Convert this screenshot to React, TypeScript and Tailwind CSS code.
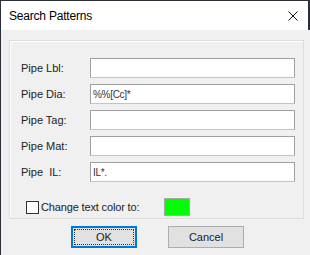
import React from 'react'

const rows = [
  { label: 'Pipe Lbl:', value: '' },
  { label: 'Pipe Dia:', value: '%%[Cc]*' },
  { label: 'Pipe Tag:', value: '' },
  { label: 'Pipe Mat:', value: '' },
  { label: 'Pipe  IL:', value: 'IL*.' },
]

export default function App() {
  return (
    <div className="w-[310px] h-[255px] overflow-hidden bg-[#f0f0f0] border-l border-t border-[#2b2f38] flex flex-col font-['Liberation_Sans',Arial,sans-serif] text-[11px] text-[#222]">
      <div className="h-[29px] shrink-0 bg-white flex items-center justify-between pl-[8px] pr-[10px] border-r-2 border-[#2b2f38]">
        <span className="text-[12px] tracking-[-0.2px] text-black">Search Patterns</span>
        <svg width="10" height="10" viewBox="0 0 10 10" className="mt-[1px]">
          <path d="M0.5 0.5 L9.5 9.5 M9.5 0.5 L0.5 9.5" stroke="#111" strokeWidth="1" />
        </svg>
      </div>

      <div className="ml-[8px] mt-[10px] w-[295px] h-[179px] border border-[#dcdcdc] shadow-[inset_1px_1px_0_#ffffff] flex flex-col">
        <div className="flex flex-col gap-[6px] mt-[17px]">
          {rows.map((row) => (
            <div key={row.label} className="flex items-center h-[20px]">
              <span className="w-[80px] pl-[11px] whitespace-pre">{row.label}</span>
              <div className="w-[205px] h-[20px] bg-white border border-[#a0a0a0] border-b-[#c4c4c4] flex items-center pl-[2px] text-[10px] tracking-[-0.3px] text-[#333]">
                {row.value}
              </div>
            </div>
          ))}
        </div>

        <div className="flex items-center mt-[16px] pl-[16px]">
          <div className="w-[13px] h-[13px] bg-white border border-[#333]" />
          <span className="ml-[2px] tracking-[-0.15px]">Change text color to:</span>
          <div className="ml-[25px] w-[26px] h-[18px] bg-[#00ff00] border border-[#a8a8a8]" />
        </div>
      </div>

      <div className="flex mt-[7px] ml-[70px] gap-[31px]">
        <button className="w-[66px] h-[22px] bg-[#e1e1e1] border-2 border-[#0078d7] flex items-center justify-center p-[1px]">
          <span className="w-full h-full border border-dotted border-[#333] flex items-center justify-center">OK</span>
        </button>
        <button className="w-[76px] h-[22px] bg-[#e1e1e1] border border-[#adadad] flex items-center justify-center">
          Cancel
        </button>
      </div>
    </div>
  )
}
